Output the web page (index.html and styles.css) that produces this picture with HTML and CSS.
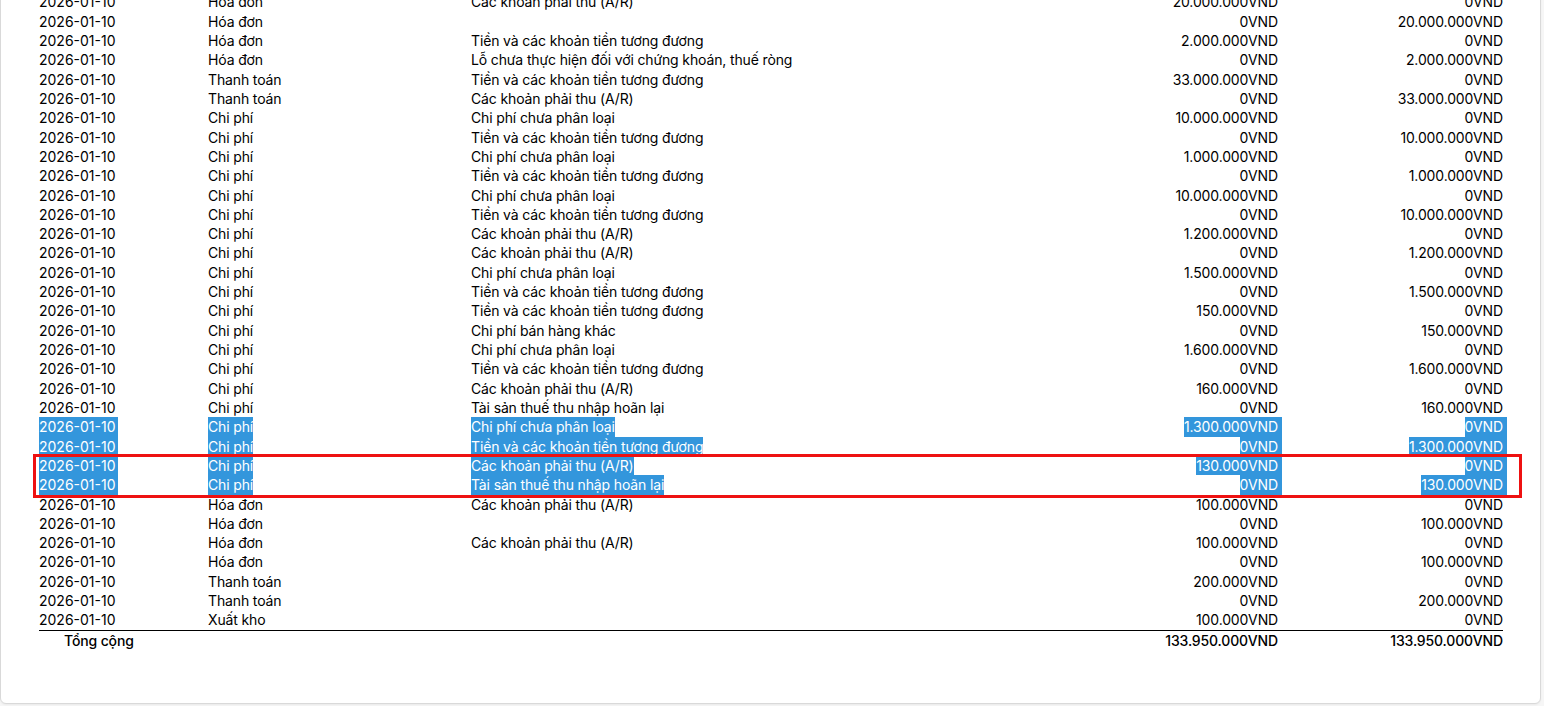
FILE: index.html
```html
<!DOCTYPE html>
<html lang="vi">
<head>
<meta charset="utf-8">
<title>Sổ nhật ký</title>
<link rel="stylesheet" href="styles.css">
</head>
<body>
<div class="card">
  <table class="ledger">
    <colgroup>
      <col class="c-date"><col class="c-type"><col class="c-acc"><col class="c-debit"><col class="c-credit">
    </colgroup>
    <tbody>
      <tr><td>2026-01-10</td><td>Hóa đơn</td><td>Các khoản phải thu (A/R)</td><td class="num">20.000.000VND</td><td class="num">0VND</td></tr>
      <tr><td>2026-01-10</td><td>Hóa đơn</td><td></td><td class="num">0VND</td><td class="num">20.000.000VND</td></tr>
      <tr><td>2026-01-10</td><td>Hóa đơn</td><td>Tiền và các khoản tiền tương đương</td><td class="num">2.000.000VND</td><td class="num">0VND</td></tr>
      <tr><td>2026-01-10</td><td>Hóa đơn</td><td>Lỗ chưa thực hiện đối với chứng khoán, thuế ròng</td><td class="num">0VND</td><td class="num">2.000.000VND</td></tr>
      <tr><td>2026-01-10</td><td>Thanh toán</td><td>Tiền và các khoản tiền tương đương</td><td class="num">33.000.000VND</td><td class="num">0VND</td></tr>
      <tr><td>2026-01-10</td><td>Thanh toán</td><td>Các khoản phải thu (A/R)</td><td class="num">0VND</td><td class="num">33.000.000VND</td></tr>
      <tr><td>2026-01-10</td><td>Chi phí</td><td>Chi phí chưa phân loại</td><td class="num">10.000.000VND</td><td class="num">0VND</td></tr>
      <tr><td>2026-01-10</td><td>Chi phí</td><td>Tiền và các khoản tiền tương đương</td><td class="num">0VND</td><td class="num">10.000.000VND</td></tr>
      <tr><td>2026-01-10</td><td>Chi phí</td><td>Chi phí chưa phân loại</td><td class="num">1.000.000VND</td><td class="num">0VND</td></tr>
      <tr><td>2026-01-10</td><td>Chi phí</td><td>Tiền và các khoản tiền tương đương</td><td class="num">0VND</td><td class="num">1.000.000VND</td></tr>
      <tr><td>2026-01-10</td><td>Chi phí</td><td>Chi phí chưa phân loại</td><td class="num">10.000.000VND</td><td class="num">0VND</td></tr>
      <tr><td>2026-01-10</td><td>Chi phí</td><td>Tiền và các khoản tiền tương đương</td><td class="num">0VND</td><td class="num">10.000.000VND</td></tr>
      <tr><td>2026-01-10</td><td>Chi phí</td><td>Các khoản phải thu (A/R)</td><td class="num">1.200.000VND</td><td class="num">0VND</td></tr>
      <tr><td>2026-01-10</td><td>Chi phí</td><td>Các khoản phải thu (A/R)</td><td class="num">0VND</td><td class="num">1.200.000VND</td></tr>
      <tr><td>2026-01-10</td><td>Chi phí</td><td>Chi phí chưa phân loại</td><td class="num">1.500.000VND</td><td class="num">0VND</td></tr>
      <tr><td>2026-01-10</td><td>Chi phí</td><td>Tiền và các khoản tiền tương đương</td><td class="num">0VND</td><td class="num">1.500.000VND</td></tr>
      <tr><td>2026-01-10</td><td>Chi phí</td><td>Tiền và các khoản tiền tương đương</td><td class="num">150.000VND</td><td class="num">0VND</td></tr>
      <tr><td>2026-01-10</td><td>Chi phí</td><td>Chi phí bán hàng khác</td><td class="num">0VND</td><td class="num">150.000VND</td></tr>
      <tr><td>2026-01-10</td><td>Chi phí</td><td>Chi phí chưa phân loại</td><td class="num">1.600.000VND</td><td class="num">0VND</td></tr>
      <tr><td>2026-01-10</td><td>Chi phí</td><td>Tiền và các khoản tiền tương đương</td><td class="num">0VND</td><td class="num">1.600.000VND</td></tr>
      <tr><td>2026-01-10</td><td>Chi phí</td><td>Các khoản phải thu (A/R)</td><td class="num">160.000VND</td><td class="num">0VND</td></tr>
      <tr><td>2026-01-10</td><td>Chi phí</td><td>Tài sản thuế thu nhập hoãn lại</td><td class="num">0VND</td><td class="num">160.000VND</td></tr>
      <tr class="selected"><td><span class="sel">2026-01-10</span></td><td><span class="sel">Chi phí</span></td><td><span class="sel">Chi phí chưa phân loại</span></td><td class="num"><span class="sel">1.300.000VND</span></td><td class="num"><span class="sel">0VND</span></td></tr>
      <tr class="selected"><td><span class="sel">2026-01-10</span></td><td><span class="sel">Chi phí</span></td><td><span class="sel">Tiền và các khoản tiền tương đương</span></td><td class="num"><span class="sel">0VND</span></td><td class="num"><span class="sel">1.300.000VND</span></td></tr>
      <tr class="selected"><td><span class="sel">2026-01-10</span></td><td><span class="sel">Chi phí</span></td><td><span class="sel">Các khoản phải thu (A/R)</span></td><td class="num"><span class="sel">130.000VND</span></td><td class="num"><span class="sel">0VND</span></td></tr>
      <tr class="selected"><td><span class="sel">2026-01-10</span></td><td><span class="sel">Chi phí</span></td><td><span class="sel">Tài sản thuế thu nhập hoãn lại</span></td><td class="num"><span class="sel">0VND</span></td><td class="num"><span class="sel">130.000VND</span></td></tr>
      <tr><td>2026-01-10</td><td>Hóa đơn</td><td>Các khoản phải thu (A/R)</td><td class="num">100.000VND</td><td class="num">0VND</td></tr>
      <tr><td>2026-01-10</td><td>Hóa đơn</td><td></td><td class="num">0VND</td><td class="num">100.000VND</td></tr>
      <tr><td>2026-01-10</td><td>Hóa đơn</td><td>Các khoản phải thu (A/R)</td><td class="num">100.000VND</td><td class="num">0VND</td></tr>
      <tr><td>2026-01-10</td><td>Hóa đơn</td><td></td><td class="num">0VND</td><td class="num">100.000VND</td></tr>
      <tr><td>2026-01-10</td><td>Thanh toán</td><td></td><td class="num">200.000VND</td><td class="num">0VND</td></tr>
      <tr><td>2026-01-10</td><td>Thanh toán</td><td></td><td class="num">0VND</td><td class="num">200.000VND</td></tr>
      <tr><td>2026-01-10</td><td>Xuất kho</td><td></td><td class="num">100.000VND</td><td class="num">0VND</td></tr>
    </tbody>
    <tfoot>
      <tr class="total"><td class="total-label" colspan="3">Tổng cộng</td><td class="num">133.950.000VND</td><td class="num">133.950.000VND</td></tr>
    </tfoot>
  </table>
  <div class="mark" aria-hidden="true"></div>
</div>
</body>
</html>
```

FILE: styles.css
```css
html, body {
  margin: 0;
  padding: 0;
}
body {
  background: #f6f6f6;
  font-family: Inter, "Noto Sans", "Liberation Sans", sans-serif;
  color: #000;
  font-size: 14px;
  letter-spacing: -0.01em;
  line-height: 19.31px;
  height: 706px;
  overflow: hidden;
}
.card {
  position: relative;
  margin: -8.6px 3px 0 0;
  background: #fff;
  border: 1px solid #d9d9d9;
  border-radius: 0 0 6px 6px;
  padding: 0 37px 53px 38px;
  box-shadow: 0 1px 2px rgba(0,0,0,0.05);
}
.ledger {
  width: 1464px;
  border-collapse: collapse;
  table-layout: fixed;
}
.c-date { width: 169px; }
.c-type { width: 263px; }
.c-acc { width: 582px; }
.c-debit { width: 225px; }
.c-credit { width: 225px; }
.ledger td {
  padding: 0;
  white-space: nowrap;
  vertical-align: top;
}
.ledger tbody td:first-child {
  letter-spacing: 0;
}
.ledger td.num {
  text-align: right;
}
.sel {
  display: inline-block;
  vertical-align: top;
  background: #3396dc;
  color: #fff;
}
tbody td:first-child .sel {
  padding-right: 2px;
}
.num .sel {
  padding-right: 4px;
  margin-right: -4px;
}
.total td {
  border-top: 1px solid #000;
  font-weight: 500;
}
.total-label {
  padding-left: 25px !important;
}
.mark {
  position: absolute;
  left: 32px;
  top: 462px;
  width: 1483px;
  height: 38px;
  border: 3px solid #ee1111;
}
```
